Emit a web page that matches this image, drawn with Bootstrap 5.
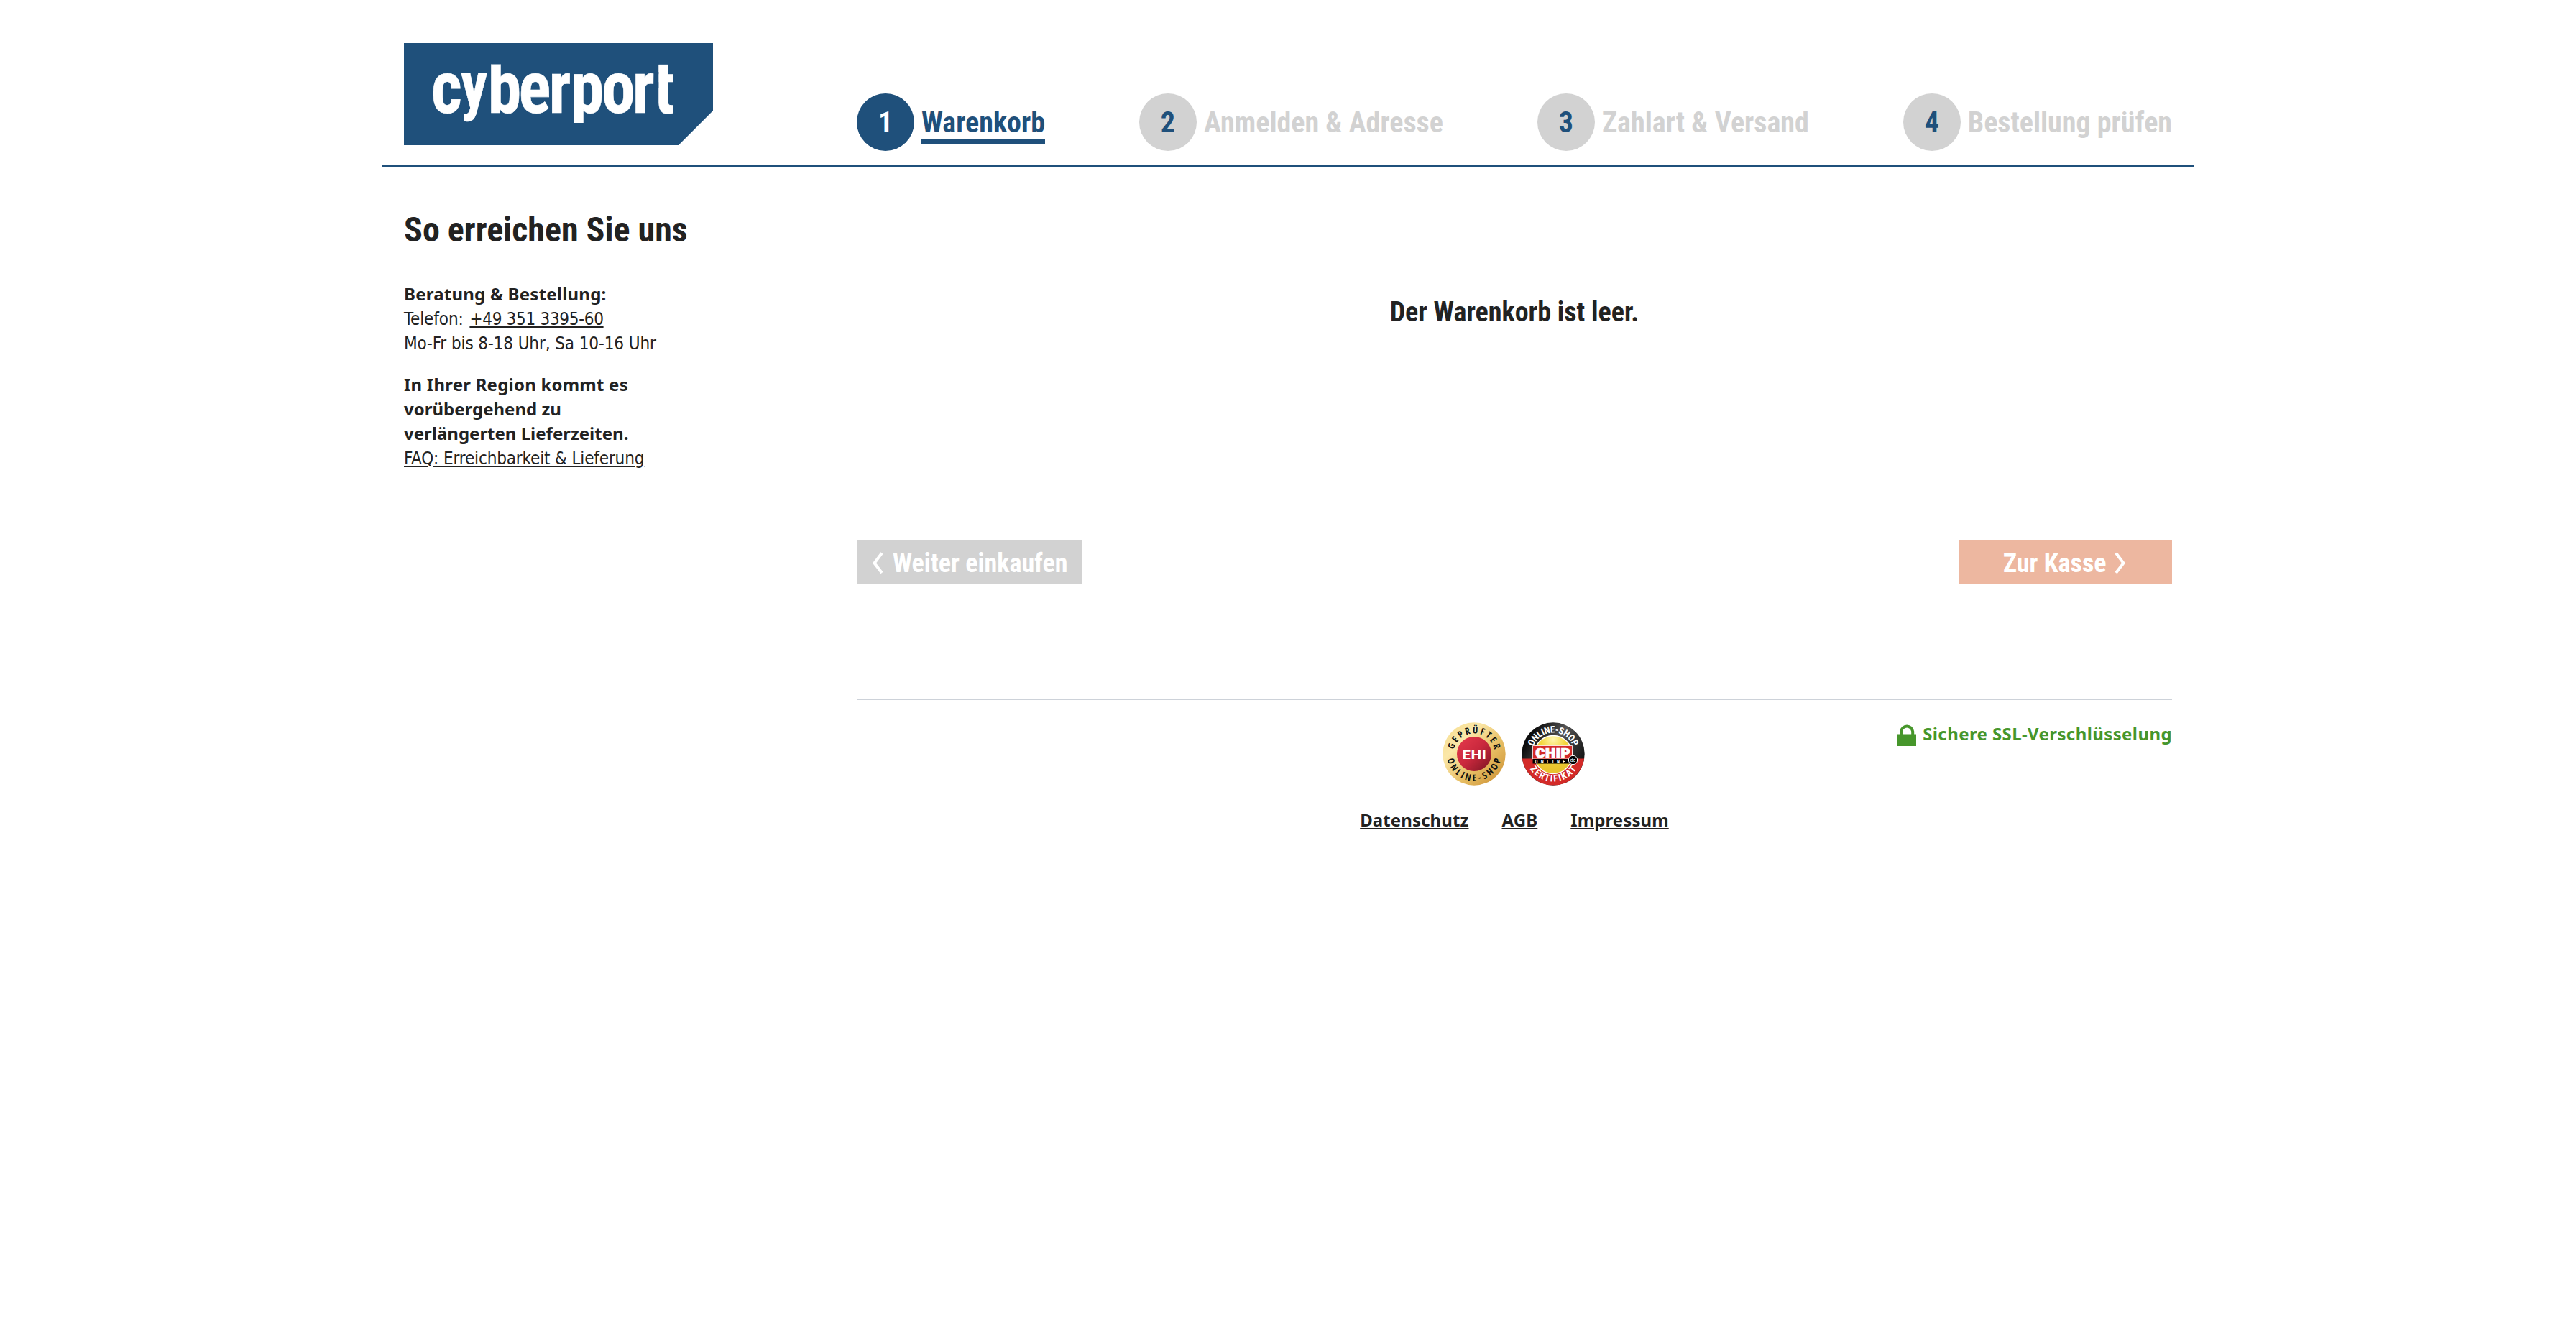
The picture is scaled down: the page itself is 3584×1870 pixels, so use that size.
<!DOCTYPE html>
<html lang="de">
<head>
<meta charset="utf-8">
<meta name="viewport" content="width=device-width, initial-scale=1">
<title>Cyberport Warenkorb</title>
<link rel="stylesheet" href="https://cdn.jsdelivr.net/npm/bootstrap@5.3.0/dist/css/bootstrap.min.css">
<style>
body{background:#fff;color:#222;font-family:"DejaVu Sans Condensed","DejaVu Sans",sans-serif;font-stretch:condensed;font-size:24px;line-height:34px}
a{color:#222;text-decoration-thickness:2px;text-underline-offset:2px}
a:hover{color:#1f507b}
.shell{width:2520px;margin-left:532px}
.head{height:232px;border-bottom:2px solid #1f507b;padding:60px 30px 0}
svg{display:block;flex:none}
.cond{font-family:"Roboto Condensed",Roboto,sans-serif;font-weight:700;font-stretch:normal}
.bold{font-family:"Noto Sans",sans-serif;font-stretch:normal;font-weight:700;letter-spacing:.1px}
.side{width:660px;padding:58px 0 0 30px}
.side h1{font-size:48px;line-height:60px;margin:0 0 42px}
.side p{margin:0 0 24px}
.ln{display:block;height:34px;letter-spacing:-.1px}
.ln.bold{letter-spacing:.22px}
.ln.plain{padding-top:1px}
.ln.last{letter-spacing:0}
.ln .tel{margin-left:2px;letter-spacing:-.3px}
.faq{letter-spacing:-.15px}
.steps{width:1830px;margin-top:70px}
.step{color:#d2d2d2;font-size:40px;line-height:82px}
.num{width:80px;height:80px;border-radius:50%;background:#d2d2d2;color:#1f507b;text-align:center;margin-right:10px}
.step.now{color:#1f507b}
.step.now .num{background:#1f507b;color:#fff}
.step.now .lbl{height:70px;border-bottom:6px solid #1f507b}
.main{width:1830px}
.empty{font-size:38px;line-height:44px;margin:180px 0 296px}
.cbtn{height:60px;border-radius:0;border:0;color:#fff;font-size:36px;line-height:60px;padding:2px 0 0;background:#d2d2d2}
.cbtn span{padding-top:2px}
.cbtn:hover{color:#fff;background:#b9b9b9}
.cbtn.back{width:314px;gap:13px;padding-left:21px}
.cbtn.go,.cbtn.go:hover{background:#edb7a0;width:296px;gap:12px;padding-left:61px}
.foot{border-top:2px solid #cdd2d9;margin-top:160px;padding-top:31px}
.seals{gap:22px;margin-bottom:31px;padding-right:1px}
.links{gap:46px}
.ssl{color:#46962b;gap:8px;letter-spacing:.4px;margin-top:-1px}
.ssl svg{margin-top:3px}
</style>
<script src="https://cdn.jsdelivr.net/npm/bootstrap@5.3.0/dist/js/bootstrap.bundle.min.js"></script>
</head>
<body>
<div class="shell">
  <header class="head d-flex justify-content-between align-items-start">
    <a href="#"><svg width="430" height="142" viewBox="0 0 430 142" role="img" aria-label="cyberport">
      <defs><clipPath id="word"><rect x="0" y="29.500" width="430" height="81.500"/></clipPath></defs>
      <path fill="#1f507b" d="M0 0H430V94L382 142H0Z"/>
      <g clip-path="url(#word)"><text class="cond" transform="scale(.92 1)" font-size="102" fill="#fff" stroke="#fff" stroke-width=".6"><tspan x="41" y="97.500">c</tspan><tspan x="86" y="90.500" font-size="91">y</tspan><tspan y="97.500" x="127 173.500 219 252 299 345.500 378">berport</tspan></text></g>
      <path fill="#1f507b" d="M348 40H354.300V62H348Z"/>
    </svg></a>
    <nav class="steps cond d-flex justify-content-between">
      <div class="step now d-flex"><span class="num">1</span><span class="lbl">Warenkorb</span></div>
      <div class="step d-flex"><span class="num">2</span><span class="lbl">Anmelden &amp; Adresse</span></div>
      <div class="step d-flex"><span class="num">3</span><span class="lbl">Zahlart &amp; Versand</span></div>
      <div class="step d-flex"><span class="num">4</span><span class="lbl">Bestellung prüfen</span></div>
    </nav>
  </header>
  <div class="d-flex align-items-start">
    <aside class="side flex-shrink-0">
      <h1 class="cond">So erreichen Sie uns</h1>
      <p><span class="ln bold">Beratung &amp; Bestellung:</span>
        <span class="ln plain">Telefon: <a class="tel" href="#">+49 351 3395-60</a></span>
        <span class="ln plain">Mo-Fr bis 8-18 Uhr, Sa 10-16 Uhr</span></p>
      <p><span class="ln bold">In Ihrer Region kommt es</span>
        <span class="ln bold last">vorübergehend zu</span>
        <span class="ln bold last">verlängerten Lieferzeiten.</span>
        <span class="ln plain"><a class="faq" href="#">FAQ: Erreichbarkeit &amp; Lieferung</a></span></p>
    </aside>
    <main class="main flex-shrink-0">
      <div class="empty cond text-center">Der Warenkorb ist leer.</div>
      <div class="d-flex justify-content-between">
        <button type="button" class="btn cond cbtn back d-flex align-items-center"><svg width="16" height="30" viewBox="0 0 16 30" fill="none" stroke="#fff" stroke-width="4"><path d="M14 1.500 3.500 15.500 14 29"/></svg><span>Weiter einkaufen</span></button>
        <button type="button" class="btn cond cbtn go d-flex align-items-center"><span>Zur Kasse</span><svg width="16" height="30" viewBox="0 0 16 30" fill="none" stroke="#fff" stroke-width="4"><path d="M2 1.500 12.500 15.500 2 29"/></svg></button>
      </div>
      <footer class="foot">
        <div class="row g-0">
          <div class="col-4"></div>
          <div class="col-4">
            <div class="seals d-flex justify-content-center">
              <svg width="88" height="88" viewBox="0 0 88 88" role="img" aria-label="EHI Geprüfter Online-Shop">
                <defs>
                  <linearGradient id="gold" x1="0" y1="0" x2="1" y2="1"><stop offset="0" stop-color="#f5dc8c"/><stop offset=".3" stop-color="#fbe7a8"/><stop offset=".6" stop-color="#e8c066"/><stop offset="1" stop-color="#c98a2c"/></linearGradient>
                  <linearGradient id="ruby" x1="0" y1="0" x2="1" y2="1"><stop offset="0" stop-color="#e63a4c"/><stop offset=".5" stop-color="#c9283d"/><stop offset="1" stop-color="#7a1522"/></linearGradient>
                  <path id="ehiTop" d="M16 52A29 29 0 1 1 72 52"/>
                  <path id="ehiLow" d="M6 44A38 38 0 0 0 82 44"/>
                </defs>
                <circle cx="44" cy="44" r="43.700" fill="url(#gold)"/>
                <circle cx="44" cy="44" r="24" fill="url(#ruby)"/>
                <g font-family="Open Sans, sans-serif" font-weight="700" font-size="13" fill="#111" text-anchor="middle">
                  <text textLength="78"><textPath href="#ehiTop" startOffset="50%">GEPRÜFTER</textPath></text>
                  <text textLength="104"><textPath href="#ehiLow" startOffset="50%">ONLINE-SHOP</textPath></text>
                </g>
                <text x="27" y="51" font-family="Roboto, sans-serif" font-weight="600" font-size="17" fill="#fff" textLength="34" lengthAdjust="spacingAndGlyphs">EHI</text>
              </svg>
              <svg width="88" height="88" viewBox="0 0 88 88" role="img" aria-label="CHIP Online Zertifikat">
                <defs>
                  <linearGradient id="coal" x1="0" y1="0" x2="1" y2=".6"><stop offset=".2" stop-color="#0c0c0c"/><stop offset=".55" stop-color="#555"/><stop offset="1" stop-color="#111"/></linearGradient>
                  <radialGradient id="sun" cx=".5" cy=".1" r=".8"><stop offset="0" stop-color="#fff6b0"/><stop offset=".4" stop-color="#f3d83f"/><stop offset="1" stop-color="#e8c32c"/></radialGradient>
                  <path id="chipTop" d="M14.500 44A29.500 29.500 0 0 1 73.500 44"/>
                  <path id="chipLow" d="M5.500 44A38.500 38.500 0 0 0 82.500 44"/>
                </defs>
                <circle cx="44" cy="44" r="43.700" fill="url(#coal)"/>
                <path fill="#d32a28" d="M.8 50.500H87.200A43.700 43.700 0 0 1 .8 50.500Z"/>
                <circle cx="44" cy="45" r="26.500" fill="url(#sun)" stroke="#fff" stroke-width="1.300"/>
                <g class="cond" fill="#fff" text-anchor="middle">
                  <text font-size="13" textLength="72"><textPath href="#chipTop" startOffset="50%">ONLINE-SHOP</textPath></text>
                  <text font-size="13" textLength="77"><textPath href="#chipLow" startOffset="50%">ZERTIFIKAT</textPath></text>
                </g>
                <path fill="#d32a28" stroke="#fff" stroke-width=".8" d="M15.500 32.500H70.500V51H15.500Z"/>
                <path d="M15.500 51H70.500V57.500H15.500Z"/>
                <text x="19" y="48.500" font-family="Roboto, sans-serif" font-weight="900" font-size="18" fill="#fff" stroke="#fff" stroke-width=".6" textLength="49" lengthAdjust="spacingAndGlyphs">CHIP</text>
                <text x="18.500" y="56.700" font-family="Roboto, sans-serif" font-weight="700" font-size="6.500" fill="#fff" textLength="42">ONLINE</text>
                <circle cx="71.500" cy="52.500" r="6.200" stroke="#fff"/>
                <text x="71.500" y="55" text-anchor="middle" font-family="Roboto, sans-serif" font-size="8" fill="#fff">de</text>
              </svg>
            </div>
            <div class="links bold d-flex justify-content-center"><a href="#">Datenschutz</a><a href="#">AGB</a><a href="#">Impressum</a></div>
          </div>
          <div class="col-4"><div class="ssl bold d-flex justify-content-end align-items-start">
            <svg width="27" height="31" viewBox="0 0 27 31"><path fill="#46962b" d="M0 14.500H26V31H0Z"/><path fill="none" stroke="#46962b" stroke-width="4" d="M5 16V11A8.200 9 0 0 1 21.200 11V16"/></svg>
            <span>Sichere SSL-Verschlüsselung</span></div></div>
        </div>
      </footer>
    </main>
  </div>
</div>
</body>
</html>
